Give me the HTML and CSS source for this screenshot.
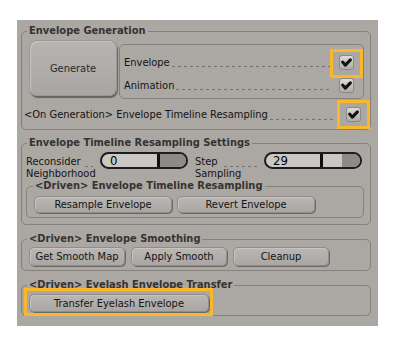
FILE: index.html
```html
<!DOCTYPE html>
<html lang="en">
<head>
    <meta charset="UTF-8">
    <meta name="viewport" content="width=device-width, initial-scale=1.0">
    <title>Envelope Tools</title>
    <link rel="stylesheet" href="styles.css">
</head>
<body>
    <div class="panel">
        <!-- Envelope generation -->
        <fieldset class="group gen">
            <legend>Envelope Generation</legend>
            <div class="gen-row">
                <button class="btn big">Generate</button>
                <div class="opts">
                    <div class="opt">
                        <span>Envelope</span><span class="lead"></span>
                        <span class="check hl-a"><svg viewBox="0 0 15 15"><path d="M3 7 L6.2 10.6 L12 4.4"/></svg></span>
                    </div>
                    <div class="opt">
                        <span>Animation</span><span class="lead"></span>
                        <span class="check"><svg viewBox="0 0 15 15"><path d="M3 7 L6.2 10.6 L12 4.4"/></svg></span>
                    </div>
                </div>
            </div>
            <div class="opt wide">
                <span>&lt;On Generation&gt; Envelope Timeline Resampling</span><span class="lead"></span>
                <span class="check hl-b"><svg viewBox="0 0 15 15"><path d="M3 7 L6.2 10.6 L12 4.4"/></svg></span>
            </div>
        </fieldset>

        <!-- Resampling settings -->
        <fieldset class="group settings">
            <legend>Envelope Timeline Resampling Settings</legend>
            <div class="slider-row">
                <div class="label l1">
                    <div class="line"><span>Reconsider</span><span class="lead"></span></div>
                    <div>Neighborhood</div>
                </div>
                <div class="slider s1">
                    <span class="val">0</span><span class="knob"></span><span class="dark"></span>
                </div>
                <div class="label l2">
                    <div class="line"><span>Step</span><span class="lead"></span></div>
                    <div>Sampling</div>
                </div>
                <div class="slider s2">
                    <span class="val">29</span><span class="knob"></span><span class="rest"></span><span class="dark"></span>
                </div>
            </div>
            <fieldset class="group inner">
                <legend>&lt;Driven&gt; Envelope Timeline Resampling</legend>
                <div class="btn-row">
                    <button class="btn w138">Resample Envelope</button>
                    <button class="btn w138">Revert Envelope</button>
                </div>
            </fieldset>
        </fieldset>

        <!-- Smoothing -->
        <fieldset class="group smooth">
            <legend>&lt;Driven&gt; Envelope Smoothing</legend>
            <div class="btn-row wide-gap">
                <button class="btn w96">Get Smooth Map</button>
                <button class="btn w96">Apply Smooth</button>
                <button class="btn w96">Cleanup</button>
            </div>
        </fieldset>

        <!-- Eyelash transfer -->
        <fieldset class="group transfer">
            <legend>&lt;Driven&gt; Eyelash Envelope Transfer</legend>
            <div class="btn-row">
                <button class="btn w180 hl-c">Transfer Eyelash Envelope</button>
            </div>
        </fieldset>
    </div>
</body>
</html>
```

FILE: styles.css
```css
body {
    margin: 0;
    background-color: #ffffff;
    font-family: "DejaVu Sans Condensed", "DejaVu Sans", Verdana, sans-serif;
    font-stretch: semi-condensed;
    font-size: 11px;
    color: #141414;
}
.panel {
    margin: 20px 0 0 17px;
    width: 361px;
    height: 306px;
    box-sizing: border-box;
    padding: 4px 7px 0 4px;
    background-color: #aba7a3;
}

/* group boxes */
.group {
    margin: 0;
    padding: 0 6px 0 4px;
    min-width: 0;
    border: 1px solid #85817d;
    border-radius: 5px;
}
.group legend {
    margin-left: 1px;
    padding: 0 2px;
    line-height: 14px;
    font-weight: bold;
    color: #353331;
}
.gen {
    padding-top: 2px;
    padding-bottom: 6px;
}
.settings {
    margin-top: 6px;
    padding-bottom: 6px;
}
.inner {
    padding: 3px 0 4px 7px;
}
.inner legend {
    margin-left: -1px;
}
.smooth {
    margin-top: 7px;
    padding-top: 1px;
    padding-bottom: 4px;
}
.transfer {
    margin-top: 7px;
    padding-top: 2px;
    padding-bottom: 3px;
}

/* buttons */
.btn {
    display: block;
    height: 18px;
    padding: 0;
    border: 1px solid #8f8c89;
    border-radius: 5px;
    background: linear-gradient(#b9b6b3, #a9a6a3);
    box-shadow: 1px 1px 0 #6b6865, inset 1px 1px 0 #c6c3c0;
    font-family: inherit;
    font-stretch: inherit;
    font-size: 11px;
    color: #141414;
}
.big {
    margin-left: 3px;
    width: 88px;
    height: 56px;
    border-radius: 8px;
    border-color: #9a9794;
    background: linear-gradient(#b7b4b1, #a8a5a2);
    box-shadow: 1px 2px 1px #66635f, inset 1px 1px 1px #c9c6c3;
    color: #2a2a2a;
}
.btn-row {
    display: flex;
    gap: 5px;
}
.smooth .btn-row,
.transfer .btn-row {
    margin-left: 3px;
}
.wide-gap {
    gap: 6px;
}
.w138 { width: 138px; height: 17px; }
.w96 { width: 96px; height: 19px; }
.w180 { width: 180px; }

/* check options */
.gen-row {
    display: flex;
    align-items: flex-start;
    gap: 2px;
}
.opts {
    margin-top: 4px;
    flex: 1;
    height: 55px;
    box-sizing: border-box;
    padding: 9px 9px 0 4px;
    border: 1px solid #85817d;
    border-radius: 5px;
    display: flex;
    flex-direction: column;
    gap: 7px;
}
.opt {
    display: flex;
    align-items: center;
    height: 16px;
}
.lead {
    flex: 1;
    align-self: flex-end;
    height: 1px;
    margin: 0 8px 3px 2px;
    background: linear-gradient(to right, #75716d 3px, transparent 3px) repeat-x;
    background-size: 6px 1px;
}
.wide {
    margin: 7px 3px 0 -2px;
    height: 17px;
}
.wide .lead {
    margin-right: 10px;
}
.check {
    position: relative;
    width: 15px;
    height: 15px;
    box-sizing: border-box;
    border: 1px solid #8b8885;
    border-radius: 3px;
    background: linear-gradient(#dedcda, #aeaba8);
}
.check svg {
    display: block;
    width: 13px;
    height: 13px;
}
.check path {
    fill: none;
    stroke: #121212;
    stroke-width: 3.6;
    stroke-linecap: round;
    stroke-linejoin: round;
}

/* sliders */
.slider-row {
    display: flex;
    align-items: flex-start;
    padding-top: 2px;
}
.label {
    margin-top: 4px;
    line-height: 11.5px;
}
.label .line {
    display: flex;
}
.label .lead {
    margin: 0 0 1px 4px;
}
.l1 { width: 74px; }
.l1 .lead { margin-right: 7px; }
.l2 { width: 69px; margin-left: 7px; margin-right: 0; }
.l2 .lead { margin: 0 6px 1px 6px; }
.slider {
    display: flex;
    height: 17px;
    box-sizing: border-box;
    border: 2px solid #1d1d1d;
    border-radius: 9px;
    overflow: hidden;
    background-color: #cac8c5;
    font-size: 13px;
    line-height: 13px;
    color: #000;
}
.s1 { width: 88px; }
.s2 { width: 98px; }
.val { box-sizing: border-box; }
.s1 .val { width: 55px; padding-left: 8px; }
.s2 .val { width: 54px; padding-left: 7px; }
.knob { width: 3px; background-color: #111; }
.rest { width: 19px; }
.dark { flex: 1; background-color: #8d8a87; }

/* yellow highlight frames */
.hl-a::after,
.hl-b::after,
.hl-c::after {
    content: "";
    position: absolute;
    border: 3px solid #fbb72b;
}
.hl-a::after { inset: -7px -10px -9px -10px; }
.hl-b::after { inset: -8px -10px -8px -10px; }
.hl-c { position: relative; }
.hl-c::after { inset: -7px -5px -5px -6px; }
```
